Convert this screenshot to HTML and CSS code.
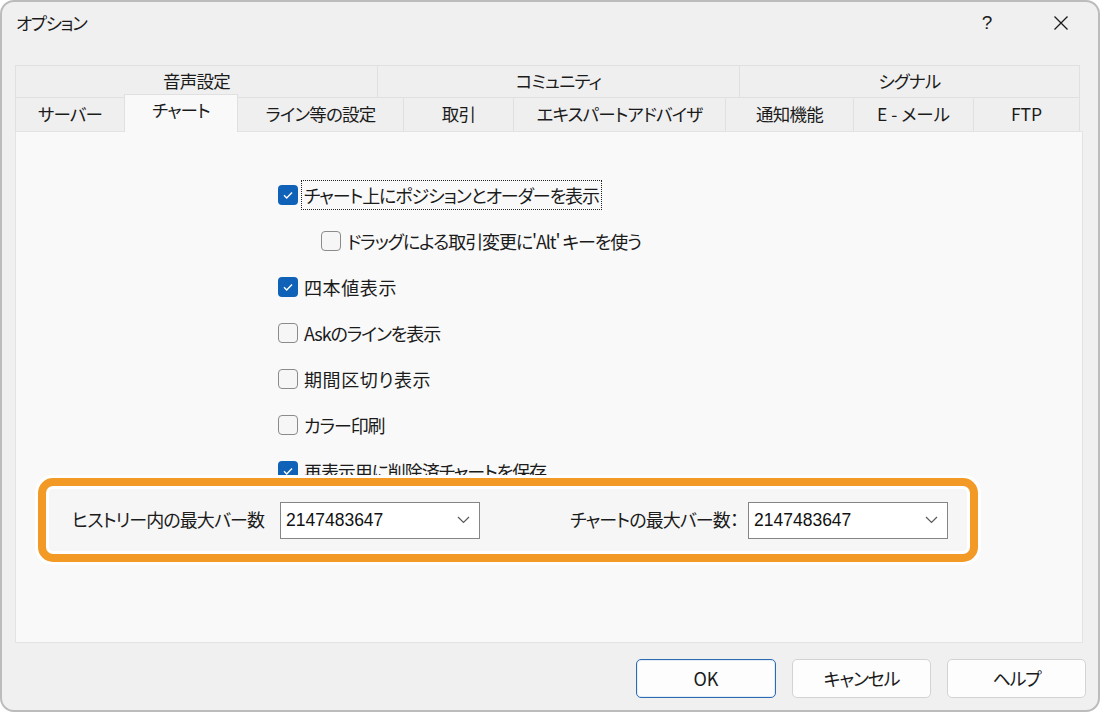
FILE: index.html
```html
<!DOCTYPE html>
<html lang="ja">
<head>
<meta charset="utf-8">
<title>オプション</title>
<link rel="stylesheet" href="styles.css">
</head>
<body>
<div class="window">
  <div class="titlebar">
    <span class="title">オプション</span>
    <span class="help">?</span>
    <span class="close">
      <svg width="16" height="16" viewBox="0 0 16 16"><path d="M1.5 1.5 L14.5 14.5 M14.5 1.5 L1.5 14.5" stroke="#1a1a1a" stroke-width="1.3" fill="none"/></svg>
    </span>
  </div>

  <div class="tabs">
    <div class="tabrow tabrow-top">
      <div class="tab">音声設定</div>
      <div class="tab">コミュニティ</div>
      <div class="tab">シグナル</div>
    </div>
    <div class="tabrow tabrow-bottom">
      <div class="tab">サーバー</div>
      <div class="tab active">チャート</div>
      <div class="tab">ライン等の設定</div>
      <div class="tab">取引</div>
      <div class="tab">エキスパートアドバイザ</div>
      <div class="tab">通知機能</div>
      <div class="tab latin">E - メール</div>
      <div class="tab latin">FTP</div>
    </div>
  </div>

  <div class="panel">
    <div class="checklist">
      <div class="check-item">
        <span class="box checked"><svg width="20" height="20" viewBox="0 0 20 20"><path d="M6 10.3 L8.7 12.9 L14 7.6" stroke="#fff" stroke-width="1.4" fill="none"/></svg></span>
        <span class="label focused">チャート上にポジションとオーダーを表示</span>
      </div>
      <div class="check-item indent">
        <span class="box"></span>
        <span class="label">ドラッグによる取引変更に'Alt' キーを使う</span>
      </div>
      <div class="check-item">
        <span class="box checked"><svg width="20" height="20" viewBox="0 0 20 20"><path d="M6 10.3 L8.7 12.9 L14 7.6" stroke="#fff" stroke-width="1.4" fill="none"/></svg></span>
        <span class="label kanji">四本値表示</span>
      </div>
      <div class="check-item">
        <span class="box"></span>
        <span class="label">Askのラインを表示</span>
      </div>
      <div class="check-item">
        <span class="box"></span>
        <span class="label kanji">期間区切り表示</span>
      </div>
      <div class="check-item">
        <span class="box"></span>
        <span class="label">カラー印刷</span>
      </div>
      <div class="check-item">
        <span class="box checked"><svg width="20" height="20" viewBox="0 0 20 20"><path d="M6 10.3 L8.7 12.9 L14 7.6" stroke="#fff" stroke-width="1.4" fill="none"/></svg></span>
        <span class="label">再表示用に削除済チャートを保存</span>
      </div>
    </div>

    <div class="highlight">
      <div class="hl-inner">
        <span class="field-label">ヒストリー内の最大バー数</span>
        <div class="combo">
          <span class="combo-value">2147483647</span>
          <svg class="chev" width="13" height="8" viewBox="0 0 13 8"><path d="M1 1 L6.5 6.5 L12 1" stroke="#5a5a5a" stroke-width="1.2" fill="none"/></svg>
        </div>
        <span class="field-label second">チャートの最大バー数：</span>
        <div class="combo combo-second">
          <span class="combo-value">2147483647</span>
          <svg class="chev" width="13" height="8" viewBox="0 0 13 8"><path d="M1 1 L6.5 6.5 L12 1" stroke="#5a5a5a" stroke-width="1.2" fill="none"/></svg>
        </div>
      </div>
    </div>
  </div>

  <div class="footer">
    <button class="btn default">OK</button>
    <button class="btn">キャンセル</button>
    <button class="btn">ヘルプ</button>
  </div>
</div>
</body>
</html>
```

FILE: styles.css
```css
html, body {
  margin: 0;
  padding: 0;
  background: #ffffff;
}

body {
  font-family: "Noto Sans CJK JP", "Noto Sans", sans-serif;
  font-feature-settings: "palt";
  color: #1b1b1b;
  font-size: 18px;
  line-height: 1.2;
}

.window {
  width: 1100px;
  height: 712px;
  box-sizing: border-box;
  border: 2px solid #bcbcbc;
  border-radius: 14px;
  background: #f0f0f0;
  display: flex;
  flex-direction: column;
  overflow: hidden;
}

/* Title bar */
.titlebar {
  height: 42px;
  flex: none;
  display: flex;
  align-items: center;
  padding: 0 27px 0 14px;
}

.title {
  font-size: 17.5px;
  letter-spacing: -1.3px;
  padding-bottom: 2px;
}

.help {
  margin-left: auto;
  width: 20px;
  text-align: center;
  font-family: "Liberation Sans", sans-serif;
  font-size: 19px;
}

.close {
  margin-left: 54px;
  width: 20px;
  height: 20px;
  display: flex;
  align-items: center;
  justify-content: center;
}

/* Tabs */
.tabs {
  flex: none;
  margin: 21px 18px 0 13px;
}

.tabrow {
  display: grid;
}

.tabrow-top {
  grid-template-columns: 362px 362px 1fr;
  height: 32px;
}

.tabrow-bottom {
  grid-template-columns: 109px 114px 165px 110px 212px 128px 120px 107px;
  height: 34px;
}

.tab {
  box-sizing: border-box;
  display: flex;
  align-items: center;
  justify-content: center;
  background: #efefef;
  border-top: 1px solid #e0e0e0;
  border-left: 1px solid #e0e0e0;
  font-size: 17.5px;
  letter-spacing: -0.8px;
  padding-bottom: 3px;
}

.tab.latin {
  letter-spacing: 0;
}

.tab:last-child {
  border-right: 1px solid #e0e0e0;
}

.tab.active {
  position: relative;
  z-index: 2;
  margin-top: -3px;
  margin-bottom: -1px;
  background: #f9f9f9;
  border-right: 1px solid #e0e0e0;
  padding-bottom: 8px;
}

.tab.active + .tab {
  border-left: none;
}

/* Panel */
.panel {
  flex: none;
  position: relative;
  height: 512px;
  box-sizing: border-box;
  margin: 0 15px 0 13px;
  background: #f9f9f9;
  border: 1px solid #e3e3e3;
}

.checklist {
  display: flex;
  flex-direction: column;
  gap: 16px;
  padding: 48px 0 0 262px;
}

.check-item {
  display: flex;
  align-items: center;
  height: 30px;
}

.check-item.indent {
  margin-left: 43px;
}

.box {
  flex: none;
  width: 20px;
  height: 20px;
  box-sizing: border-box;
  border-radius: 4px;
  border: 1px solid #8b8b8b;
  background: #f6f6f6;
  display: flex;
  align-items: center;
  justify-content: center;
}

.box.checked {
  border: none;
  background: #0f62b8;
}

.box svg {
  display: block;
}

.label {
  margin-left: 4px;
  padding: 0 2px;
  font-size: 18px;
  line-height: 28px;
  letter-spacing: -1.1px;
  white-space: nowrap;
}

.label.kanji {
  letter-spacing: 0.6px;
}

.label.focused {
  outline: 1px dotted #222;
}

/* Highlighted field row */
.highlight {
  position: absolute;
  left: 19px;
  top: 343px;
  width: 946px;
  height: 90px;
  box-sizing: border-box;
  border: 3px solid #ffffff;
  border-radius: 18px;
  z-index: 3;
}

.hl-inner {
  height: 100%;
  box-sizing: border-box;
  border: 8px solid #f39a26;
  border-radius: 15px;
  background: #f6f6f6;
  box-shadow: inset 0 0 0 3px #ffffff;
  display: flex;
  align-items: center;
  padding: 0 22px 0 26px;
}

.field-label {
  font-size: 18px;
  letter-spacing: -0.9px;
  white-space: nowrap;
}

.field-label.second {
  margin-left: auto;
}

.combo {
  flex: none;
  width: 200px;
  height: 37px;
  box-sizing: border-box;
  margin-left: 16px;
  background: #ffffff;
  border: 1px solid #858585;
  display: flex;
  align-items: center;
  padding: 0 9px 0 5px;
}

.combo-second {
  margin-left: 10px;
}

.combo-value {
  font-family: "Liberation Sans", sans-serif;
  font-size: 17.5px;
  color: #111;
}

.chev {
  margin-left: auto;
  display: block;
}

/* Footer */
.footer {
  flex: 1;
  display: flex;
  justify-content: flex-end;
  align-items: flex-start;
  gap: 16px;
  padding: 16px 12px 0 0;
}

.btn {
  width: 139px;
  height: 39px;
  box-sizing: border-box;
  background: #fdfdfd;
  border: 1px solid #d3d3d3;
  border-radius: 5px;
  font-family: "Noto Sans CJK JP", sans-serif;
  font-feature-settings: "palt";
  font-size: 18px;
  letter-spacing: -1.2px;
  color: #1b1b1b;
  padding: 0 0 2px 0;
}

.btn.default {
  width: 140px;
  letter-spacing: 0;
  border: 1px solid #2d6bb0;
  box-shadow: inset 0 0 0 1px #e3edf8;
}
```
